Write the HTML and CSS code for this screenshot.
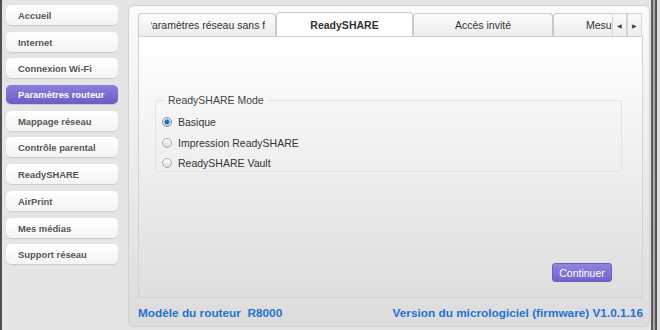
FILE: index.html
```html
<!DOCTYPE html>
<html lang="fr">
<head>
    <meta charset="UTF-8">
    <title>Paramètres routeur</title>
    <link rel="stylesheet" href="styles.css">
</head>
<body>
<div class="page">

    <!--menu gauche-->
    <ul class="menu">
        <li><a href="">Accueil</a></li>
        <li><a href="">Internet</a></li>
        <li><a href="">Connexion Wi-Fi</a></li>
        <li class="on"><a href="">Paramètres routeur</a></li>
        <li><a href="">Mappage réseau</a></li>
        <li><a href="">Contrôle parental</a></li>
        <li><a href="">ReadySHARE</a></li>
        <li><a href="">AirPrint</a></li>
        <li><a href="">Mes médias</a></li>
        <li><a href="">Support réseau</a></li>
    </ul>

    <!--panneau principal-->
    <div class="panel">
        <div class="tabs">
            <div class="tab first"><span class="clip"><span class="shift">Paramètres réseau sans fil</span></span></div>
            <div class="tab on">ReadySHARE</div>
            <div class="tab third">Accès invité</div>
            <div class="tab last"><span class="clip">Mesure du trafic</span></div>
            <div class="arrow">&#9664;</div>
            <div class="arrow">&#9654;</div>
        </div>

        <div class="content">
            <fieldset class="mode">
                <legend>ReadySHARE Mode</legend>
                <label class="opt"><input type="radio" name="mode" checked> Basique</label>
                <label class="opt"><input type="radio" name="mode"> Impression ReadySHARE</label>
                <label class="opt"><input type="radio" name="mode"> ReadySHARE Vault</label>
            </fieldset>
            <div class="actions">
                <button class="go">Continuer</button>
            </div>
        </div>

        <div class="foot">
            <span>Modèle du routeur&nbsp; R8000</span>
            <span>Version du micrologiciel (firmware) V1.0.1.16</span>
        </div>
    </div>

    <div class="edge"></div>
</div>
</body>
</html>
```

FILE: styles.css
```css
*{
    margin: 0;
    padding: 0;
    box-sizing: border-box;
}
li{
    list-style: none;
}
a{
    text-decoration: none;
}
body{
    background: #e5e5e5;
    font-family: "Liberation Sans", Arial, sans-serif;
    font-size: 10.5px;
    color: #333;
}
.page{
    display: flex;
    height: 330px;
    border-left: 2px solid #4f4f4f;
}

/*menu*/
.menu{
    display: flex;
    flex-direction: column;
    gap: 6.7px;
    width: 126px;
    padding: 5px 0 0 4px;
}
.menu li a{
    display: block;
    width: 112px;
    height: 20px;
    padding: 1px 0 0 12px;
    line-height: 20px;
    border-radius: 5px;
    background: linear-gradient(#ffffff, #f4f4f4);
    box-shadow: 0 1px 1px rgba(0,0,0,0.12);
    font-size: 9.4px;
    font-weight: bold;
    color: #555;
}
.menu li.on a{
    background: linear-gradient(#8a7edd, #6a5ec6);
    color: #fff;
    height: 19px;
    line-height: 18px;
}

/*panneau*/
.panel{
    display: flex;
    flex-direction: column;
    width: 522px;
    height: 322px;
    margin-top: 5px;
    padding: 6px 6px 0 9px;
    border: 1px solid #d0d0d0;
    border-radius: 6px;
    background: linear-gradient(#fbfbfb, #dcdcdc);
}
.tabs{
    display: flex;
    align-items: flex-end;
    height: 24px;
}
.tab{
    display: flex;
    align-items: center;
    justify-content: center;
    height: 23px;
    border: 1px solid #c9c9c9;
    border-bottom: none;
    border-radius: 4px 4px 0 0;
    background: linear-gradient(#fdfdfd, #ececec);
    font-size: 10.5px;
    color: #333;
    white-space: nowrap;
}
.tab.first{
    width: 138px;
    justify-content: flex-start;
    padding: 0 10px 0 12px;
}
.tab.on{
    width: 137px;
    height: 24px;
    background: #fff;
    font-weight: bold;
}
.tab.third{
    width: 140px;
}
.tab.last{
    width: 59px;
    justify-content: flex-start;
    overflow: hidden;
    padding-left: 32px;
    border-right: none;
    border-radius: 4px 0 0 0;
}
.tab .clip{
    display: block;
    overflow: hidden;
    white-space: nowrap;
}
.tab.last .clip{
    width: 26px;
}
.tab .shift{
    display: block;
    margin-left: -6px;
}
.arrow{
    display: flex;
    align-items: center;
    justify-content: center;
    width: 15px;
    height: 23px;
    border: 1px solid #d4d4d4;
    border-bottom: none;
    background: linear-gradient(#fafafa, #eeeeee);
    font-size: 6px;
    color: #444;
}

.content{
    display: flex;
    flex-direction: column;
    height: 262px;
    padding: 57px 20px 15px 16px;
    border: 1px solid #d3d3d3;
    background: linear-gradient(#ffffff, #dedede);
}
.mode{
    height: 78px;
    padding: 6px 0 0 6px;
    border: 1px solid #dde4ec;
    border-radius: 3px;
}
.mode legend{
    margin-left: 4px;
    padding: 0 2px;
    color: #444;
}
.opt{
    display: flex;
    align-items: center;
    gap: 6px;
    height: 20.5px;
    color: #333;
}
.opt input{
    appearance: none;
    width: 10px;
    height: 10px;
    border: 1px solid #a9a9a9;
    border-radius: 50%;
    background: linear-gradient(#ffffff, #dcdcdc);
}
.opt input:checked{
    border-color: #7d8ea0;
    background: radial-gradient(circle, #1d5f9e 0, #2b78bd 2px, #cfdcea 3px, #f2f2f2 5px);
}
.actions{
    display: flex;
    justify-content: flex-end;
    margin-top: auto;
    padding-right: 10px;
}
.go{
    width: 60px;
    height: 19px;
    border: 1px solid #6a5ec0;
    border-radius: 3px;
    background: linear-gradient(#8f84df, #7064c9);
    font-family: "Liberation Sans", Arial, sans-serif;
    font-size: 10.5px;
    color: #fff;
}

.foot{
    display: flex;
    justify-content: space-between;
    align-items: center;
    height: 28px;
    padding-top: 2px;
    font-size: 11.8px;
    font-weight: bold;
    color: #1d72d2;
}

.edge{
    width: 10px;
    background: linear-gradient(to right, #e5e5e5 0, #e5e5e5 1px, #5c5c5c 1px, #5c5c5c 3px, #a8a8a8 3px, #a8a8a8 5px, #555 5px, #555 7px, #dcdcdc 7px);
}
```
